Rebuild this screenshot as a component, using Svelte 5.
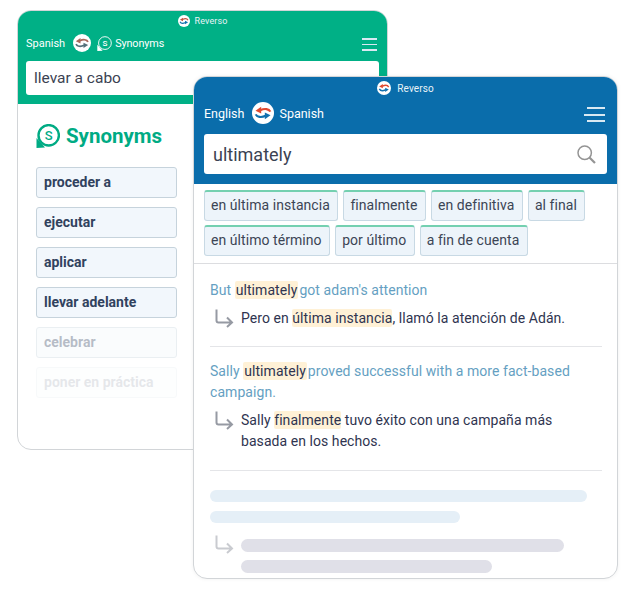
<script>
  const synonyms = [
    { t: 'proceder a', o: 1 },
    { t: 'ejecutar', o: 1 },
    { t: 'aplicar', o: 1 },
    { t: 'llevar adelante', o: 1 },
    { t: 'celebrar', o: 0.35 },
    { t: 'poner en práctica', o: 0.12 }
  ];
  const chips = [
    ['en última instancia', 'finalmente', 'en definitiva', 'al final'],
    ['en último término', 'por último', 'a fin de cuenta']
  ];
</script>

{#snippet swap(size, top, bottom)}
  <svg width={size} height={size} viewBox="0 0 24 24" class="swap">
    <circle cx="12" cy="12" r="12" fill="#fff" />
    <g>
      <path d="M20 10.500C18.500 7.500 14 6.600 9 9" fill="none" stroke={top} stroke-width="2.400" />
      <path d="M3.800 9.500L10 5.300V12.500z" fill={top} />
    </g>
    <g transform="rotate(180 12 12)">
      <path d="M20 10.500C18.500 7.500 14 6.600 9 9" fill="none" stroke={bottom} stroke-width="2.400" />
      <path d="M3.800 9.500L10 5.300V12.500z" fill={bottom} />
    </g>
  </svg>
{/snippet}

{#snippet arrow(color)}
  <svg class="arrow" width="22" height="20" viewBox="0 0 22 20">
    <path d="M2.500 0.500V11.500a2 2 0 0 0 2 2H18M13 8.500l5 5-5 4.500" fill="none" stroke={color} stroke-width="2" />
  </svg>
{/snippet}

{#snippet synIcon(size, stroke, sw)}
  <svg class="syn-icon" width={size} height={size} viewBox="0 0 24 24">
    <circle cx="12.700" cy="11.300" r="10.200" fill="none" stroke={stroke} stroke-width={sw} />
    <path d="M0.500 24V14L9 23.500z" fill={stroke} />
    <text x="12.700" y="16" text-anchor="middle" font-size="13" font-weight="500" font-family="Roboto" fill={stroke}>S</text>
  </svg>
{/snippet}

{#snippet menu()}
  <div class="menu"><span></span><span></span><span></span></div>
{/snippet}

<div class="canvas">
  <section class="card back">
    <header class="green">
      <div class="brand small">{@render swap(12, '#c0523f', '#1270ae')}<span>Reverso</span></div>
      <div class="langs">
        <span>Spanish</span>
        {@render swap(18, '#a8685c', '#54707a')}
        <span class="syn">{@render synIcon(15, '#fff', 1.500)}Synonyms</span>
        {@render menu()}
      </div>
      <div class="search back-search">llevar a cabo</div>
    </header>
    <div class="back-body">
      <h2>{@render synIcon(24, '#00ab84', 2.400)}Synonyms</h2>
      <ul class="syn-list">
        {#each synonyms as s}
          <li style="opacity:{s.o}">{s.t}</li>
        {/each}
      </ul>
    </div>
  </section>

  <section class="card front">
    <header class="blue">
      <div class="brand">{@render swap(14, '#e0492f', '#1270ae')}<span>Reverso</span></div>
      <div class="langs front-langs">
        <span>English</span>
        {@render swap(22, '#e0492f', '#1270ae')}
        <span>Spanish</span>
        {@render menu()}
      </div>
      <div class="search front-search">
        <span>ultimately</span>
        <svg width="19" height="19" viewBox="0 0 19 19">
          <circle cx="7.700" cy="7.700" r="6.700" fill="none" stroke="#949494" stroke-width="1.500" />
          <path d="M12.500 12.500l5.500 5.500" stroke="#949494" stroke-width="2.200" />
        </svg>
      </div>
    </header>

    <div class="chips">
      {#each chips as row}
        <div class="chip-row">
          {#each row as c}<span class="chip">{c}</span>{/each}
        </div>
      {/each}
    </div>

    <div class="examples">
      <article class="example first">
        <p class="src">But <mark class="hl-src">ultimately</mark>got adam's attention</p>
        <div class="trg">
          {@render arrow('#969aa3')}
          <p>Pero en <mark>última instancia</mark>, llamó la atención de Adán.</p>
        </div>
      </article>
      <article class="example second">
        <p class="src">Sally <mark class="hl-src">ultimately</mark>proved successful with a more fact-based campaign.</p>
        <div class="trg">
          {@render arrow('#969aa3')}
          <p>Sally <mark>finalmente</mark> tuvo éxito con una campaña más basada en los hechos.</p>
        </div>
      </article>
      <div class="skeleton">
        <div class="bar blue-bar w1"></div>
        <div class="bar blue-bar w2"></div>
        <div class="skel-trg">
          {@render arrow('#c9cbd0')}
          <div class="skel-bars">
            <div class="bar grey-bar w3"></div>
            <div class="bar grey-bar w4"></div>
          </div>
        </div>
      </div>
    </div>
  </section>
</div>

<style>
  :global(body) { margin: 0; background: #fff; }
  .canvas {
    position: relative;
    width: 644px;
    height: 614px;
    overflow: hidden;
    font-family: Roboto, sans-serif;
  }
  .card {
    position: absolute;
    box-sizing: border-box;
    background: #fff;
    overflow: hidden;
    border-radius: 14px;
    border: 1px solid #d2d5d8;
    display: flex;
    flex-direction: column;
  }
  .back { left: 17px; top: 10px; width: 371px; height: 440px; }
  .front { left: 193px; top: 76px; width: 425px; height: 503px; box-shadow: 0 0 4px rgba(0,0,0,.06); }

  header { color: #fff; margin: -1px -1px 0; }
  .green { background: #00b086; height: 94px; padding: 0 9px; box-sizing: border-box; }
  .blue { background: #0a6dab; height: 108px; padding: 0 11px; box-sizing: border-box; }

  .brand { display: flex; align-items: center; justify-content: center; gap: 6px; font-size: 10px; color: #e8f3f8; letter-spacing: .1px; height: 24px; }
  .small { gap: 5px; height: 21px; font-size: 9px; }
  .swap { display: block; flex: none; }

  .langs { display: flex; align-items: center; gap: 8px; font-size: 11px; height: 24px; }
  .syn { display: flex; align-items: center; gap: 3px; font-size: 10.800px; margin-left: -2px; letter-spacing: -.1px; }
  .syn-icon { display: block; flex: none; }
  .front-langs { gap: 8px; font-size: 12.500px; height: 26px; margin-bottom: 9px; margin-top: -1px; padding-top: 2px; box-sizing: border-box; }
  .front-langs span:nth-of-type(2) { margin-left: -3px; }
  .green .langs { margin-bottom: 6px; }

  .menu { margin-left: auto; display: flex; flex-direction: column; gap: 4.500px; width: 18px; margin-right: 2px; padding-top: 3px; }
  .menu span { display: block; height: 2px; background: #d9e9f2; }
  .green .menu { width: 15px; margin-right: 2px; gap: 3.800px; }
  .green .menu span { height: 1.500px; }

  .search { background: #fff; border-radius: 3px; box-sizing: border-box; color: #3b4252; display: flex; align-items: center; }
  .back-search { height: 34px; padding-left: 8px; font-size: 15.500px; }
  .front-search { height: 40px; padding: 0 11px 0 9px; font-size: 18px; justify-content: space-between; }

  .back-body { padding: 0 18px; }
  h2 { margin: 19px 0 18px; height: 26px; display: flex; align-items: center; gap: 6px; font-size: 20.500px; font-weight: 700; color: #00ab84; }
  .syn-list { list-style: none; margin: 0; padding: 0; width: 141px; display: flex; flex-direction: column; gap: 9px; }
  .syn-list li { box-sizing: border-box; height: 31px; padding: 0 0 1px 7px; display: flex; align-items: center; background: #f2f7fc; border: 1px solid #c6d3dc; border-radius: 3px; font-size: 14px; font-weight: 700; color: #31425e; }

  .chips { padding: 6px 10px; height: 80px; box-sizing: border-box; border-bottom: 1px solid #dcdde0; display: flex; flex-direction: column; gap: 4px; }
  .chip-row { display: flex; gap: 5px; }
  .chip { box-sizing: border-box; height: 31px; padding: 0 7.500px 2px 6px; display: flex; align-items: center; background: #edf4fa; border: 1px solid #c8d9e4; border-top: 2px solid #74d0b0; border-radius: 3px; font-size: 14px; letter-spacing: .06px; color: #3c4555; }

  .examples { padding: 0 15px 0 16px; }
  .example { border-bottom: 1px solid #e4e5e8; }
  .first { height: 83px; padding-top: 16px; box-sizing: border-box; }
  .second { height: 124px; padding-top: 14px; box-sizing: border-box; }
  p { margin: 0; font-size: 14px; line-height: 21px; letter-spacing: .06px; }
  .src { color: #659fc2; }
  .trg { display: flex; gap: 5px; margin-top: 7px; padding-left: 4px; color: #2f3450; }
  .arrow { flex: none; margin-top: 1px; }
  .trg p { width: 336px; }
  .first .trg p { width: 345px; white-space: nowrap; }
  mark { background: #fff1d6; color: #2f3450; border-radius: 2px; padding: 1px 0; }
  .hl-src { padding: 1px; margin-right: 1px; }

  .skeleton { padding-top: 19px; }
  .bar { height: 12px; border-radius: 6px; }
  .blue-bar { background: #e5eff7; margin-bottom: 9px; }
  .w1 { width: 377px; }
  .w2 { width: 250px; }
  .skel-trg { display: flex; gap: 5px; padding-left: 4px; margin-top: 16px; }
  .skel-trg .arrow { margin-top: -4px; }
  .skel-bars { display: flex; flex-direction: column; gap: 8px; }
  .grey-bar { background: #e0e0e8; height: 13px; border-radius: 6.500px; }
  .w3 { width: 323px; }
  .w4 { width: 251px; }
</style>
